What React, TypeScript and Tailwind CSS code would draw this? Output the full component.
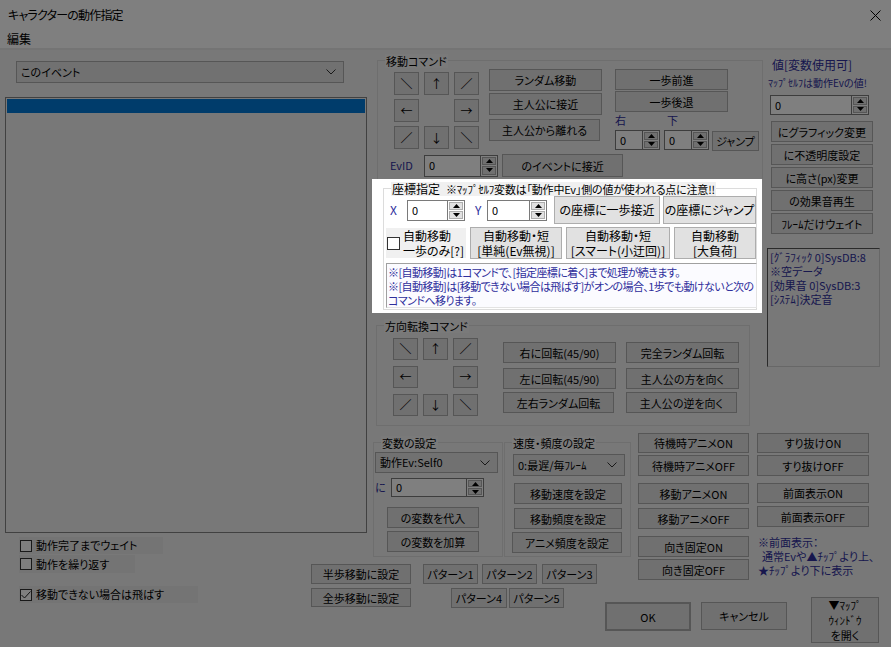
import React from "react";

type P = { c?: string; children?: React.ReactNode };

// plain windows-ish push button
function Btn({ c = "", children }: P) {
  return (
    <div
      className={`flex flex-col items-center justify-center shrink-0 bg-[#e1e1e1] border border-[#adadad] text-[11px] leading-[14px] text-black whitespace-nowrap ${c}`}
    >
      {children}
    </div>
  );
}

function Tri({ down }: { down?: boolean }) {
  return (
    <svg width="7" height="4" viewBox="0 0 7 4">
      <path d={down ? "M0 0 L3.5 4 L7 0Z" : "M0 4 L3.5 0 L7 4Z"} fill="#000" />
    </svg>
  );
}

function Spin({ c = "" }: { c?: string }) {
  return (
    <div className={`flex shrink-0 ${c}`}>
      <div className="flex-1 flex items-center bg-white border border-[#7a7a7a] pl-[4px] text-[11px] leading-none">
        0
      </div>
      <div className="w-[17px] flex flex-col gap-[1px] border border-l-0 border-[#7a7a7a] bg-white p-[1px]">
        <div className="flex-1 flex items-center justify-center bg-[#e1e1e1] border border-[#adadad]">
          <Tri />
        </div>
        <div className="flex-1 flex items-center justify-center bg-[#e1e1e1] border border-[#adadad]">
          <Tri down />
        </div>
      </div>
    </div>
  );
}

function Combo({ c = "", text }: { c?: string; text: string }) {
  return (
    <div
      className={`flex items-center justify-between shrink-0 bg-[#e3e3e3] border border-[#adadad] pl-[4px] pr-[7px] text-[11px] leading-none ${c}`}
    >
      <span>{text}</span>
      <svg width="10" height="6" viewBox="0 0 10 6">
        <path d="M0.5 0.5 L5 5 L9.5 0.5" stroke="#333" fill="none" />
      </svg>
    </div>
  );
}

function Check({ on, c = "" }: { on?: boolean; c?: string }) {
  return (
    <div className={`shrink-0 flex items-center justify-center border border-[#333] bg-white ${c}`}>
      {on && (
        <svg width="10" height="8" viewBox="0 0 10 8">
          <path d="M0.5 4 L3.5 7 L9.5 0.5" stroke="#222" fill="none" />
        </svg>
      )}
    </div>
  );
}

function Group({ label, c = "", children }: P & { label: string }) {
  return (
    <div className={`shrink-0 border border-[#dcdcdc] ${c}`}>
      <div className="-mt-[7px] ml-[7px] w-fit px-[1px] bg-[#f5f5f5] text-[11px] leading-[14px] whitespace-nowrap">
        {label}
      </div>
      {children}
    </div>
  );
}

const DIRS = ["＼", "↑", "／", "←", "", "→", "／", "↓", "＼"];

export default function App() {
  return (
    <div className="relative w-[891px] h-[647px] overflow-hidden flex flex-col bg-[#f0f0f0] text-black [font-family:'Noto_Sans_CJK_JP',sans-serif] [font-feature-settings:'palt']">
      {/* title + menu */}
      <div className="h-[30px] shrink-0 bg-white flex items-center justify-between pl-[8px] pr-[10px] text-[12px]">
        <span className="tracking-[-0.8px]">キャラクターの動作指定</span>
        <svg width="11" height="11" viewBox="0 0 11 11">
          <path d="M0.5 0.5 L10.5 10.5 M10.5 0.5 L0.5 10.5" stroke="#000" />
        </svg>
      </div>
      <div className="h-[18px] shrink-0 bg-white flex items-center pl-[7px] text-[12px]">編集</div>
      <div className="h-[2px] shrink-0 bg-[#e8e8e8]" />

      <div className="flex flex-1">
        {/* left column */}
        <div className="w-[372px] shrink-0 flex flex-col">
          <Combo c="mt-[11px] ml-[16px] w-[328px] h-[22px]" text="このイベント" />
          <div className="mt-[14px] ml-[5px] w-[362px] h-[436px] border border-[#828282] bg-[#f0f0f0] p-[1px]">
            <div className="h-[14px] bg-[#0078d7]" />
          </div>
          <div className="mt-[4px] ml-[19px] w-[144px] h-[17px] flex items-center pl-[1px] bg-[#e9e9e9] text-[11px] leading-none">
            <Check c="w-[12px] h-[12px]" />
            <span className="ml-[4px]">動作完了までウェイト</span>
          </div>
          <div className="mt-[1px] ml-[19px] w-[116px] h-[18px] flex items-center pl-[1px] bg-[#e9e9e9] text-[11px] leading-none">
            <Check c="w-[12px] h-[12px]" />
            <span className="ml-[4px]">動作を繰り返す</span>
          </div>
          <div className="mt-[13px] ml-[19px] w-[179px] h-[17px] flex items-center pl-[1px] bg-[#e9e9e9] text-[11px] leading-none">
            <Check on c="w-[12px] h-[12px]" />
            <span className="ml-[4px]">移動できない場合は飛ばす</span>
          </div>
        </div>

        {/* right region */}
        <div className="flex-1 flex flex-col">
          <div className="flex">
            <div className="w-[391px] shrink-0 flex flex-col">
              <Group label="移動コマンド" c="mt-[10px] ml-[5px] w-[386px] h-[119px] border-b-0">
                <div className="mt-[1px] flex items-start">
                  <div className="ml-[16px] mt-[3px] grid grid-cols-[25px_25px_25px] auto-rows-[23px] gap-x-[5px] gap-y-[4px]">
                    {DIRS.map((d, i) =>
                      d ? (
                        <Btn key={i} c="text-[12px]">
                          {d}
                        </Btn>
                      ) : (
                        <div key={i} />
                      )
                    )}
                  </div>
                  <div className="ml-[10px] flex flex-col">
                    <Btn c="w-[113px] h-[22px]">ランダム移動</Btn>
                    <Btn c="mt-[2px] w-[113px] h-[22px]">主人公に接近</Btn>
                    <Btn c="mt-[4px] w-[111px] h-[22px]">主人公から離れる</Btn>
                  </div>
                  <div className="ml-[13px] flex flex-col">
                    <Btn c="w-[113px] h-[21px]">一歩前進</Btn>
                    <Btn c="mt-[1px] w-[113px] h-[21px]">一歩後退</Btn>
                    <div className="mt-[1px] h-[15px] flex text-[11px] leading-[15px] text-[#2e2e9c]">
                      <span className="w-[52px]">右</span>
                      <span>下</span>
                    </div>
                    <div className="mt-[2px] flex items-start">
                      <Spin c="w-[45px] h-[20px]" />
                      <Spin c="ml-[4px] w-[45px] h-[20px]" />
                      <Btn c="ml-[3px] mt-[1px] w-[47px] h-[20px]">ジャンプ</Btn>
                    </div>
                  </div>
                </div>
                <div className="mt-[3px] h-[23px] flex items-center">
                  <span className="ml-[12px] w-[34px] text-[11px] text-[#2e2e9c]">EvID</span>
                  <Spin c="w-[74px] h-[22px]" />
                  <Btn c="ml-[4px] w-[121px] h-[23px]">のイベントに接近</Btn>
                </div>
              </Group>

              {/* highlighted coordinate panel */}
              <div className="relative z-20 w-[390px] h-[134px] bg-white flex flex-col">
                <div className="mt-[9px] ml-[11px] w-[374px] h-[122px] border border-[#dcdcdc]">
                  <div className="-mt-[7px] ml-[7px] w-fit px-[1px] bg-[#f0f0f0] text-[11px] leading-[14px] whitespace-nowrap">
                    <span className="text-[12px]">座標指定</span>
                    <span className="ml-[6px] tracking-[-0.2px]">※ﾏｯﾌﾟｾﾙﾌ変数は「動作中Ev」側の値が使われる点に注意!!</span>
                  </div>
                  <div className="h-[28px] flex items-center">
                    <span className="ml-[6px] w-[17px] text-[12px] text-[#2e2e9c]">X</span>
                    <Spin c="w-[58px] h-[21px]" />
                    <span className="ml-[10px] w-[12px] text-[12px] text-[#2e2e9c]">Y</span>
                    <Spin c="w-[60px] h-[21px]" />
                    <Btn c="ml-[7px] w-[106px] h-[28px] text-[12px]">の座標に一歩接近</Btn>
                    <Btn c="ml-[3px] w-[93px] h-[28px] text-[12px]">の座標にジャンプ</Btn>
                  </div>
                  <div className="mt-[3px] h-[32px] flex">
                    <div className="ml-[2px] mt-[1px] w-[80px] h-[30px] flex items-center bg-[#f0f0f0]">
                      <Check c="ml-[1px] w-[13px] h-[13px]" />
                      <div className="ml-[3px] flex flex-col text-[12px] leading-[15px] whitespace-nowrap">
                        <span>自動移動</span>
                        <span>一歩のみ[?]</span>
                      </div>
                    </div>
                    <Btn c="ml-[4px] w-[92px] h-[32px] text-[12px] leading-[15px]">
                      <span>自動移動・短</span>
                      <span>[単純(Ev無視)]</span>
                    </Btn>
                    <Btn c="ml-[4px] w-[104px] h-[32px] text-[12px] leading-[15px]">
                      <span>自動移動・短</span>
                      <span>[スマート(小迂回)]</span>
                    </Btn>
                    <Btn c="ml-[4px] w-[82px] h-[32px] text-[12px] leading-[15px]">
                      <span>自動移動</span>
                      <span>[大負荷]</span>
                    </Btn>
                  </div>
                  <div className="mt-[4px] ml-[2px] w-[371px] h-[45px] overflow-hidden border border-[#a0a0a0] border-r-[#e3e3e3] border-b-[#e3e3e3] bg-[#fbfbff] pl-[1px] pt-[1px] text-[11px] leading-[14px] tracking-[-0.6px] text-[#2e2e9c] whitespace-nowrap">
                    <div>※[自動移動]は1コマンドで、[指定座標に着く]まで処理が続きます。</div>
                    <div>※[自動移動]は[移動できない場合は飛ばす]がオンの場合、1歩でも動けないと次の</div>
                    <div>コマンドへ移ります。</div>
                  </div>
                </div>
              </div>

              <Group label="方向転換コマンド" c="mt-[12px] ml-[4px] w-[374px] h-[101px]">
                <div className="flex items-start">
                  <div className="ml-[16px] mt-[5px] grid grid-cols-[25px_25px_25px] auto-rows-[22px] gap-x-[5px] gap-y-[6px]">
                    {DIRS.map((d, i) =>
                      d ? (
                        <Btn key={i} c="text-[12px]">
                          {d}
                        </Btn>
                      ) : (
                        <div key={i} />
                      )
                    )}
                  </div>
                  <div className="ml-[25px] mt-[9px] flex flex-col">
                    <Btn c="w-[113px] h-[21px]">右に回転(45/90)</Btn>
                    <Btn c="mt-[5px] w-[113px] h-[21px]">左に回転(45/90)</Btn>
                    <Btn c="mt-[3px] w-[111px] h-[21px]">左右ランダム回転</Btn>
                  </div>
                  <div className="ml-[10px] mt-[9px] flex flex-col">
                    <Btn c="w-[113px] h-[21px]">完全ランダム回転</Btn>
                    <Btn c="mt-[5px] w-[113px] h-[21px]">主人公の方を向く</Btn>
                    <Btn c="mt-[3px] w-[111px] h-[21px]">主人公の逆を向く</Btn>
                  </div>
                </div>
              </Group>
            </div>

            {/* right column */}
            <div className="ml-[4px] w-[124px] flex flex-col">
              <span className="mt-[8px] ml-[5px] text-[12px] leading-[14px] text-[#2e2e9c]">値[変数使用可]</span>
              <span className="mt-[5px] ml-[1px] text-[10px] leading-[12px] text-[#2e2e9c] whitespace-nowrap">
                ﾏｯﾌﾟｾﾙﾌは動作Evの値!
              </span>
              <Spin c="mt-[6px] ml-[3px] w-[99px] h-[20px]" />
              <div className="mt-[6px] ml-[4px] flex flex-col gap-[2px]">
                <Btn c="w-[102px] h-[21px]">にグラフィック変更</Btn>
                <Btn c="w-[102px] h-[21px]">に不透明度設定</Btn>
                <Btn c="w-[102px] h-[21px]">に高さ(px)変更</Btn>
                <Btn c="w-[102px] h-[21px]">の効果音再生</Btn>
                <Btn c="w-[102px] h-[21px]">ﾌﾚｰﾑだけウェイト</Btn>
              </div>
              <div className="mt-[14px] w-[113px] h-[119px] border border-[#555] border-r-[#cfcfcf] border-b-[#cfcfcf] pl-[2px] pt-[1px] text-[11px] leading-[14px] text-[#2e2e9c] whitespace-nowrap">
                <div>[ｸﾞﾗﾌｨｯｸ 0]SysDB:8</div>
                <div>※空データ</div>
                <div>[効果音 0]SysDB:3</div>
                <div>[ｼｽﾃﾑ]決定音</div>
              </div>
            </div>
          </div>

          {/* settings row */}
          <div className="flex h-[138px]">
            <Group label="変数の設定" c="mt-[16px] ml-[1px] w-[130px] h-[115px]">
              <Combo c="mt-[2px] ml-[1px] w-[123px] h-[21px]" text="動作Ev:Self0" />
              <div className="mt-[5px] flex items-center">
                <span className="ml-[1px] w-[16px] text-[11px] text-[#2e2e9c]">に</span>
                <Spin c="w-[93px] h-[19px]" />
              </div>
              <Btn c="mt-[10px] ml-[13px] w-[92px] h-[21px]">の変数を代入</Btn>
              <Btn c="mt-[3px] ml-[13px] w-[92px] h-[21px]">の変数を加算</Btn>
            </Group>
            <Group label="速度・頻度の設定" c="mt-[16px] ml-[1px] w-[127px] h-[115px]">
              <Combo c="mt-[4px] ml-[8px] w-[112px] h-[22px]" text="0:最遅/毎ﾌﾚｰﾑ" />
              <Btn c="mt-[7px] ml-[9px] w-[108px] h-[21px]">移動速度を設定</Btn>
              <Btn c="mt-[4px] ml-[9px] w-[108px] h-[21px]">移動頻度を設定</Btn>
              <Btn c="mt-[3px] ml-[7px] w-[110px] h-[21px]">アニメ頻度を設定</Btn>
            </Group>
            <div className="ml-[7px] mt-[7px] flex flex-col">
              <Btn c="w-[111px] h-[20px]">待機時アニメON</Btn>
              <Btn c="mt-[2px] w-[111px] h-[21px]">待機時アニメOFF</Btn>
              <Btn c="mt-[7px] w-[111px] h-[21px]">移動アニメON</Btn>
              <Btn c="mt-[4px] w-[111px] h-[21px]">移動アニメOFF</Btn>
              <Btn c="mt-[7px] w-[111px] h-[21px]">向き固定ON</Btn>
              <Btn c="mt-[2px] w-[111px] h-[21px]">向き固定OFF</Btn>
            </div>
            <div className="ml-[8px] mt-[7px] flex flex-col">
              <Btn c="w-[112px] h-[20px]">すり抜けON</Btn>
              <Btn c="mt-[2px] w-[112px] h-[21px]">すり抜けOFF</Btn>
              <Btn c="mt-[7px] w-[112px] h-[20px]">前面表示ON</Btn>
              <Btn c="mt-[3px] w-[112px] h-[21px]">前面表示OFF</Btn>
              <div className="mt-[8px] ml-[1px] text-[11px] leading-[14px] text-[#2e2e9c] whitespace-nowrap">
                <div>※前面表示：</div>
                <div className="pl-[4px]">通常Evや▲ﾁｯﾌﾟより上、</div>
                <div>★ﾁｯﾌﾟより下に表示</div>
              </div>
            </div>
          </div>

          {/* bottom row */}
          <div className="-ml-[61px] flex items-start">
            <div className="flex flex-col">
              <Btn c="w-[100px] h-[20px]">半歩移動に設定</Btn>
              <Btn c="mt-[4px] w-[100px] h-[19px]">全歩移動に設定</Btn>
            </div>
            <div className="ml-[12px] flex flex-col">
              <div className="flex">
                <Btn c="w-[55px] h-[20px]">パターン1</Btn>
                <Btn c="ml-[4px] w-[55px] h-[20px]">パターン2</Btn>
                <Btn c="ml-[5px] w-[55px] h-[20px]">パターン3</Btn>
              </div>
              <div className="mt-[4px] ml-[28px] flex">
                <Btn c="w-[56px] h-[20px]">パターン4</Btn>
                <Btn c="ml-[2px] w-[55px] h-[20px]">パターン5</Btn>
              </div>
            </div>
            <Btn c="ml-[8px] mt-[38px] w-[86px] h-[29px] border-2 border-[#0078d7]">OK</Btn>
            <Btn c="ml-[10px] mt-[38px] w-[86px] h-[28px]">キャンセル</Btn>
            <Btn c="ml-[24px] mt-[33px] w-[68px] h-[46px] leading-[15px]">
              <span>▼ﾏｯﾌﾟ</span>
              <span>ｳｨﾝﾄﾞｳ</span>
              <span>を開く</span>
            </Btn>
          </div>
        </div>
      </div>

      {/* dimming overlay, the coordinate panel sits above it */}
      <div className="pointer-events-none absolute inset-0 z-10 bg-black/50" />
    </div>
  );
}
